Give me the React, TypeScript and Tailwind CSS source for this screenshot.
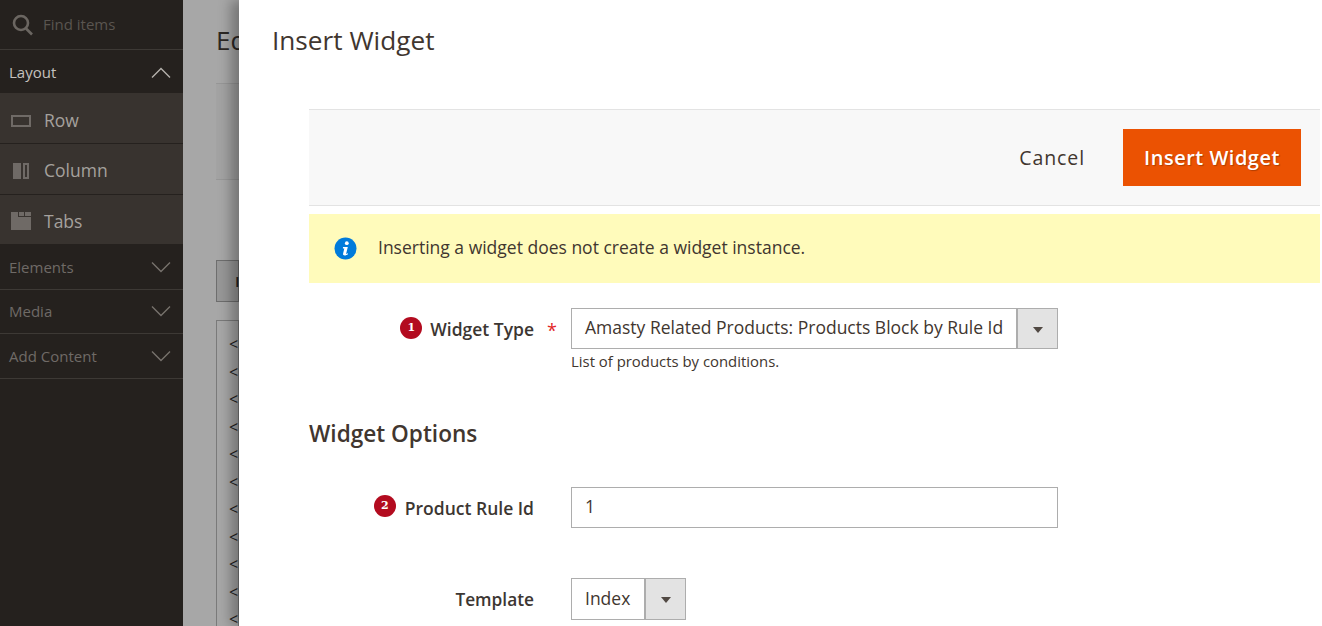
const sans = "font-['Open_Sans',sans-serif]";

function Caret() {
  return (
    <div className="flex w-[41px] items-center justify-center self-stretch border-l-2 border-[#adadad] bg-[#e3e3e3]">
      <span className="mt-[2px] border-x-[5.5px] border-t-[6px] border-x-transparent border-t-[#514943]" />
    </div>
  );
}

function Step({ n }: { n: number }) {
  return (
    <span className="mb-[3px] flex size-[22px] shrink-0 items-center justify-center rounded-full bg-[#b30b1f] font-['DejaVu_Serif',serif] text-[11px] font-bold text-white">
      {n}
    </span>
  );
}

function Chevron({ up, color }: { up?: boolean; color: string }) {
  return (
    <svg width="20" height="11" viewBox="0 0 20 11" fill="none" stroke={color} strokeWidth="1.4">
      <path d={up ? "M1 10.5 10 1.5l9 9" : "M1 .5l9 9 9-9"} />
    </svg>
  );
}

function SearchIcon() {
  return (
    <svg width="21" height="22" viewBox="0 0 21 22" fill="none" stroke="#6b6661" strokeWidth="2.6">
      <circle cx="9" cy="9" r="7" />
      <path d="M14 14.5l6 6" />
    </svg>
  );
}

function RowIcon() {
  return <span className="block h-[12px] w-[20px] border-2 border-[#6f6a66]" />;
}

function ColumnIcon() {
  return (
    <span className="ml-[2px] flex h-[16px] w-[16px] gap-[2px]">
      <span className="w-[8px] bg-[#6f6a66]" />
      <span className="w-[6px] border-2 border-[#6f6a66]" />
    </span>
  );
}

function TabsIcon() {
  return (
    <svg width="20" height="18" viewBox="0 0 20 18" fill="#6f6a66">
      <rect x="0" y="0" width="7" height="5" />
      <rect x="8" y="0" width="5" height="4" />
      <rect x="14" y="0" width="6" height="4" />
      <rect x="0" y="5" width="20" height="13" />
    </svg>
  );
}

function Sidebar() {
  const blocks = [
    { label: "Row", icon: <RowIcon />, cls: "h-[51px] pt-[5px]" },
    { label: "Column", icon: <ColumnIcon />, cls: "h-[51px] pt-[3px]" },
    { label: "Tabs", icon: <TabsIcon />, cls: "h-[50px] pt-[3px]" },
  ];
  const groups = [
    { label: "Elements", h: "h-[45px]" },
    { label: "Media", h: "h-[44px]" },
    { label: "Add Content", h: "h-[45px]" },
  ];
  return (
    <aside className="flex h-full w-[183px] shrink-0 flex-col bg-[#25211e]">
      <div className="flex h-[50px] items-center gap-[10px] border-b border-[#3d3935] pl-[12px]">
        <SearchIcon />
        <span className="text-[15px] text-[#5a5550]">Find items</span>
      </div>
      <div className="flex h-[43px] items-center justify-between pl-[9px] pr-[12px] pt-[2px] text-[#c5c2bf]">
        <span className="text-[15px]">Layout</span>
        <Chevron up color="#b5b1ad" />
      </div>
      {blocks.map((b) => (
        <div
          key={b.label}
          className={`flex ${b.cls} items-center border-b border-[#25211e] bg-[#38332f] pl-[11px]`}
        >
          <span className="flex w-[33px] items-center">{b.icon}</span>
          <span className="text-[17.5px] text-[#a5a19d]">{b.label}</span>
        </div>
      ))}
      {groups.map((g) => (
        <div
          key={g.label}
          className={`flex ${g.h} items-center justify-between border-b border-[#3d3935] pl-[9px] pr-[12px]`}
        >
          <span className="text-[15px] text-[#6f6a66]">{g.label}</span>
          <Chevron color="#77726d" />
        </div>
      ))}
    </aside>
  );
}

// only a 56px strip of the page behind the modal is visible
function Backdrop() {
  return (
    <main className="h-full w-[56px] shrink-0 overflow-hidden bg-[#a7a7a7] pl-[33px] pt-[24px]">
      <h1 className="whitespace-nowrap text-[26px] leading-[32px] text-[#2c2825]">Edit Page</h1>
      <div className="mt-[27px] h-[97px] border-y border-[#979797] bg-[#a3a3a3]" />
      <div className="mt-[80px] flex h-[42px] items-center whitespace-nowrap border border-[#6e6e6e] bg-[#979797] pl-[18px] text-[15px] font-semibold text-[#222]">
        Insert
      </div>
      <div className="mt-[18px] h-[400px] whitespace-nowrap border border-[#7a7a7a] pl-[12px] pt-[10px] text-[16px] leading-[27.5px] text-[#222]">
        {Array.from({ length: 11 }).map((_, i) => (
          <div key={i}>&lt;</div>
        ))}
      </div>
    </main>
  );
}

function Modal() {
  return (
    <section className="relative h-full flex-1 overflow-hidden bg-white shadow-[-8px_0_12px_rgba(0,0,0,0.3)]">
      <h2 className="pl-[33px] pt-[22px] text-[26.2px] leading-[36px] text-[#41362f]">Insert Widget</h2>

      <div className="ml-[70px] mr-[2px] mt-[51px]">
        <div className="flex h-[97px] items-center justify-end border-y border-[#e3e3e3] bg-[#f8f8f8] pr-[19px]">
          <span className="mr-[38px] text-[19.5px] font-medium tracking-[0.9px] text-[#41362f]">Cancel</span>
          <button className="h-[57px] w-[178px] bg-[#eb5202] text-[20px] font-semibold tracking-[0.5px] text-white [text-shadow:1px_1px_1px_rgba(0,0,0,0.25)]">
            Insert Widget
          </button>
        </div>

        <div className="mt-[8px] flex h-[69px] items-center bg-[#fffbbb] pl-[25px]">
          <svg width="23" height="23" viewBox="0 0 23 23">
            <circle cx="11.5" cy="11.5" r="11" fill="#007bdb" />
            <circle cx="12.8" cy="6.2" r="1.9" fill="#fff" />
            <path d="M9 10h4.8l-1.6 6.4c-.1.5.2.6.6.4l1-.6.3.7c-1.2 1-2.2 1.6-3.4 1.6-1.3 0-1.9-.8-1.6-2l1.2-4.9-1.4-.2z" fill="#fff" />
          </svg>
          <span className="ml-[21px] pb-[2px] text-[17.5px] text-[#41362f]">Inserting a widget does not create a widget instance.</span>
        </div>

        <div className="mt-[25px] flex">
          <div className="flex h-[41px] w-[225px] items-center justify-end gap-[8px] pt-[2px]">
            <Step n={1} />
            <span className="text-[17.5px] font-semibold text-[#3c3632]">Widget Type</span>
          </div>
          <span className="ml-[13px] mr-[13px] w-[11px] pt-[10px] text-[18px] leading-[24px] text-[#e22626]">*</span>
          <div>
            <div className="flex h-[41px] w-[487px] items-center border border-[#adadad]">
              <span className="flex-1 whitespace-nowrap pb-[2px] pl-[13px] text-[17.5px] text-[#41362f]">
                Amasty Related Products: Products Block by Rule Id
              </span>
              <Caret />
            </div>
            <p className="mt-[2px] text-[14.9px] leading-[20px] text-[#41362f]">List of products by conditions.</p>
          </div>
        </div>

        <h3 className="mt-[47px] text-[22.6px] font-semibold leading-[32px] text-[#41362f]">Widget Options</h3>

        <div className="mt-[37px] flex items-center">
          <div className="flex w-[225px] items-center justify-end gap-[9px]">
            <Step n={2} />
            <span className="pt-[2px] text-[17.5px] font-semibold text-[#3c3632]">Product Rule Id</span>
          </div>
          <div className="ml-[37px] flex h-[41px] w-[487px] items-center border border-[#adadad] pb-[2px] pl-[13px] text-[17.5px] text-[#41362f]">
            1
          </div>
        </div>

        <div className="mt-[50px] flex items-center">
          <span className="w-[225px] pt-[2px] text-right text-[17.3px] font-semibold text-[#3c3632]">Template</span>
          <div className="ml-[37px] flex h-[42px] w-[115px] items-center border border-[#adadad]">
            <span className="flex-1 pb-[2px] pl-[13px] text-[17.5px] text-[#41362f]">Index</span>
            <Caret />
          </div>
        </div>
      </div>
    </section>
  );
}

export default function App() {
  return (
    <div className={`flex h-[626px] w-full overflow-hidden ${sans}`}>
      <Sidebar />
      <Backdrop />
      <Modal />
    </div>
  );
}
